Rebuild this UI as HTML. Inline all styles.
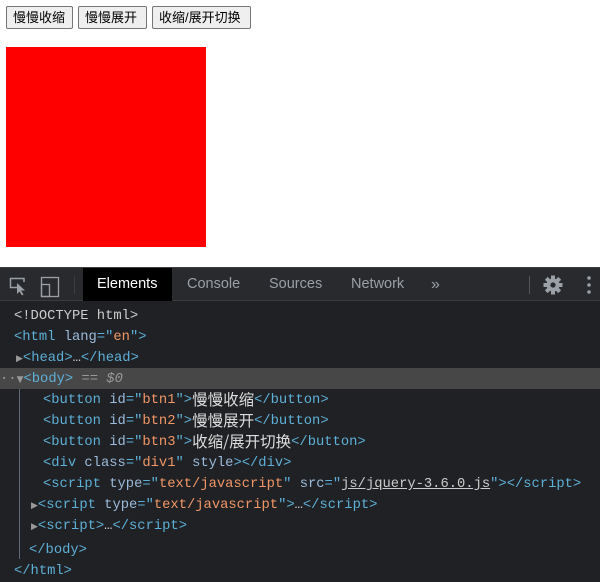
<!DOCTYPE html>
<html><head><meta charset="utf-8"><style>
*{margin:0;padding:0;box-sizing:border-box}
body{width:600px;height:582px;background:#fff;position:relative;overflow:hidden;font-family:"Liberation Sans","Noto Sans CJK SC",sans-serif}
.btn{position:absolute;top:6px;height:23px;border:1px solid #767676;border-radius:2px;background:#efefef;font-size:13px;line-height:21px;padding:0 6px;color:#000;white-space:nowrap}
#red{position:absolute;left:6px;top:47px;width:200px;height:200px;background:#f00}
#dt{position:absolute;left:0;top:267px;width:600px;height:315px;background:#202124}
#tb{position:absolute;left:0;top:0;width:600px;height:34px;background:#292a2d;border-bottom:1px solid #3c3c3c;border-top:1px solid #3c3c3c}
.tab{position:absolute;top:0;height:33px;line-height:33px;font-size:14.5px;color:#9aa0a6}
.ln{position:absolute;left:0;width:600px;height:21px;line-height:21px;font-family:"Liberation Mono","Noto Sans CJK SC",monospace;font-size:13.8px;color:#ccc;white-space:pre;overflow:visible}
.t{color:#5db0d7}.a{color:#9bbbdc}.v{color:#f29766}.g{color:#999;font-style:italic}
.c{font-size:15.5px;font-family:"Noto Sans CJK SC",sans-serif;color:#ddd;line-height:0;display:inline-block;vertical-align:top;position:relative;top:9px}
.tri{color:#999;font-size:9px;font-family:"DejaVu Sans",sans-serif}
</style></head><body>
<div class="btn" style="left:6px;width:67px">慢慢收缩</div>
<div class="btn" style="left:78px;width:69px">慢慢展开</div>
<div class="btn" style="left:152px;width:99px">收缩/展开切换</div>
<div id="red"></div>
<div id="dt">
<div id="tb">
<svg width="80" height="33" style="position:absolute;left:0;top:0">
<path d="M20 19.5H10.5V10.5H24V14" fill="none" stroke="#9aa0a6" stroke-width="1.5"/>
<path d="M17 15L17 26L19.5 23.5L22 27.5L23.5 26.5L21 22.5L25 22.5Z" fill="#9aa0a6"/>
<rect x="41.5" y="9.5" width="17" height="19" fill="none" stroke="#9aa0a6" stroke-width="1.3"/>
<rect x="41.5" y="16.5" width="8" height="12" fill="none" stroke="#9aa0a6" stroke-width="1.3"/>
<line x1="74.5" y1="8" x2="74.5" y2="26" stroke="#3c3c3c"/>
</svg>
<div style="position:absolute;left:83px;top:0;width:89px;height:33px;background:#000"></div>
<div class="tab" style="left:97px;color:#fff">Elements</div>
<div class="tab" style="left:187px">Console</div>
<div class="tab" style="left:269px">Sources</div>
<div class="tab" style="left:351px">Network</div>
<div class="tab" style="left:431px;font-size:16px">»</div>
<div style="position:absolute;left:529px;top:8px;width:1px;height:18px;background:#555"></div>
<svg width="70" height="33" style="position:absolute;left:530px;top:0">
<g transform="translate(23,17)" fill="#9aa0a6">
<circle r="6.5"/>
<g><rect x="-2" y="-9.5" width="4" height="19"/><rect x="-2" y="-9.5" width="4" height="19" transform="rotate(45)"/><rect x="-2" y="-9.5" width="4" height="19" transform="rotate(90)"/><rect x="-2" y="-9.5" width="4" height="19" transform="rotate(135)"/></g>
<circle r="2.6" fill="#292a2d"/></g>
<circle cx="59" cy="10" r="1.8" fill="#9aa0a6"/><circle cx="59" cy="17" r="1.8" fill="#9aa0a6"/><circle cx="59" cy="24" r="1.8" fill="#9aa0a6"/>
</svg>
</div>
<div style="position:absolute;left:0;top:101px;width:600px;height:21px;background:#474747"></div>
<div style="position:absolute;left:19px;top:122px;width:1px;height:170px;background:#5a6b80"></div>
<div class="ln" style="top:39px;left:14px">&lt;!DOCTYPE html&gt;</div>
<div class="ln" style="top:60px;left:14px"><span class="t">&lt;html </span><span class="a">lang</span><span class="t">="</span><span class="v">en</span><span class="t">"&gt;</span></div>
<div class="ln" style="top:81px;left:16px"><span class="tri">▶</span><span class="t">&lt;head&gt;</span>…<span class="t">&lt;/head&gt;</span></div>
<div class="ln" style="top:102px;left:0"><span class="g" style="font-style:normal">··</span><span class="tri">▼</span><span class="t">&lt;body&gt;</span><span class="g"> == $0</span></div>
<div class="ln" style="top:123px;left:43px"><span class="t">&lt;button </span><span class="a">id</span><span class="t">="</span><span class="v">btn1</span><span class="t">"&gt;</span><span class="c">慢慢收缩</span><span class="t">&lt;/button&gt;</span></div>
<div class="ln" style="top:144px;left:43px"><span class="t">&lt;button </span><span class="a">id</span><span class="t">="</span><span class="v">btn2</span><span class="t">"&gt;</span><span class="c">慢慢展开</span><span class="t">&lt;/button&gt;</span></div>
<div class="ln" style="top:165px;left:43px"><span class="t">&lt;button </span><span class="a">id</span><span class="t">="</span><span class="v">btn3</span><span class="t">"&gt;</span><span class="c">收缩/展开切换</span><span class="t">&lt;/button&gt;</span></div>
<div class="ln" style="top:186px;left:43px"><span class="t">&lt;div </span><span class="a">class</span><span class="t">="</span><span class="v">div1</span><span class="t">" </span><span class="a">style</span><span class="t">&gt;&lt;/div&gt;</span></div>
<div class="ln" style="top:207px;left:43px"><span class="t">&lt;script </span><span class="a">type</span><span class="t">="</span><span class="v">text/javascript</span><span class="t">" </span><span class="a">src</span><span class="t">="</span><span style="text-decoration:underline">js/jquery-3.6.0.js</span><span class="t">"&gt;&lt;/script&gt;</span></div>
<div class="ln" style="top:228px;left:31px"><span class="tri">▶</span><span class="t">&lt;script </span><span class="a">type</span><span class="t">="</span><span class="v">text/javascript</span><span class="t">"&gt;</span>…<span class="t">&lt;/script&gt;</span></div>
<div class="ln" style="top:249px;left:31px"><span class="tri">▶</span><span class="t">&lt;script&gt;</span>…<span class="t">&lt;/script&gt;</span></div>
<div class="ln" style="top:273px;left:29px"><span class="t">&lt;/body&gt;</span></div>
<div class="ln" style="top:294px;left:14px"><span class="t">&lt;/html&gt;</span></div>
</div>
</body></html>
